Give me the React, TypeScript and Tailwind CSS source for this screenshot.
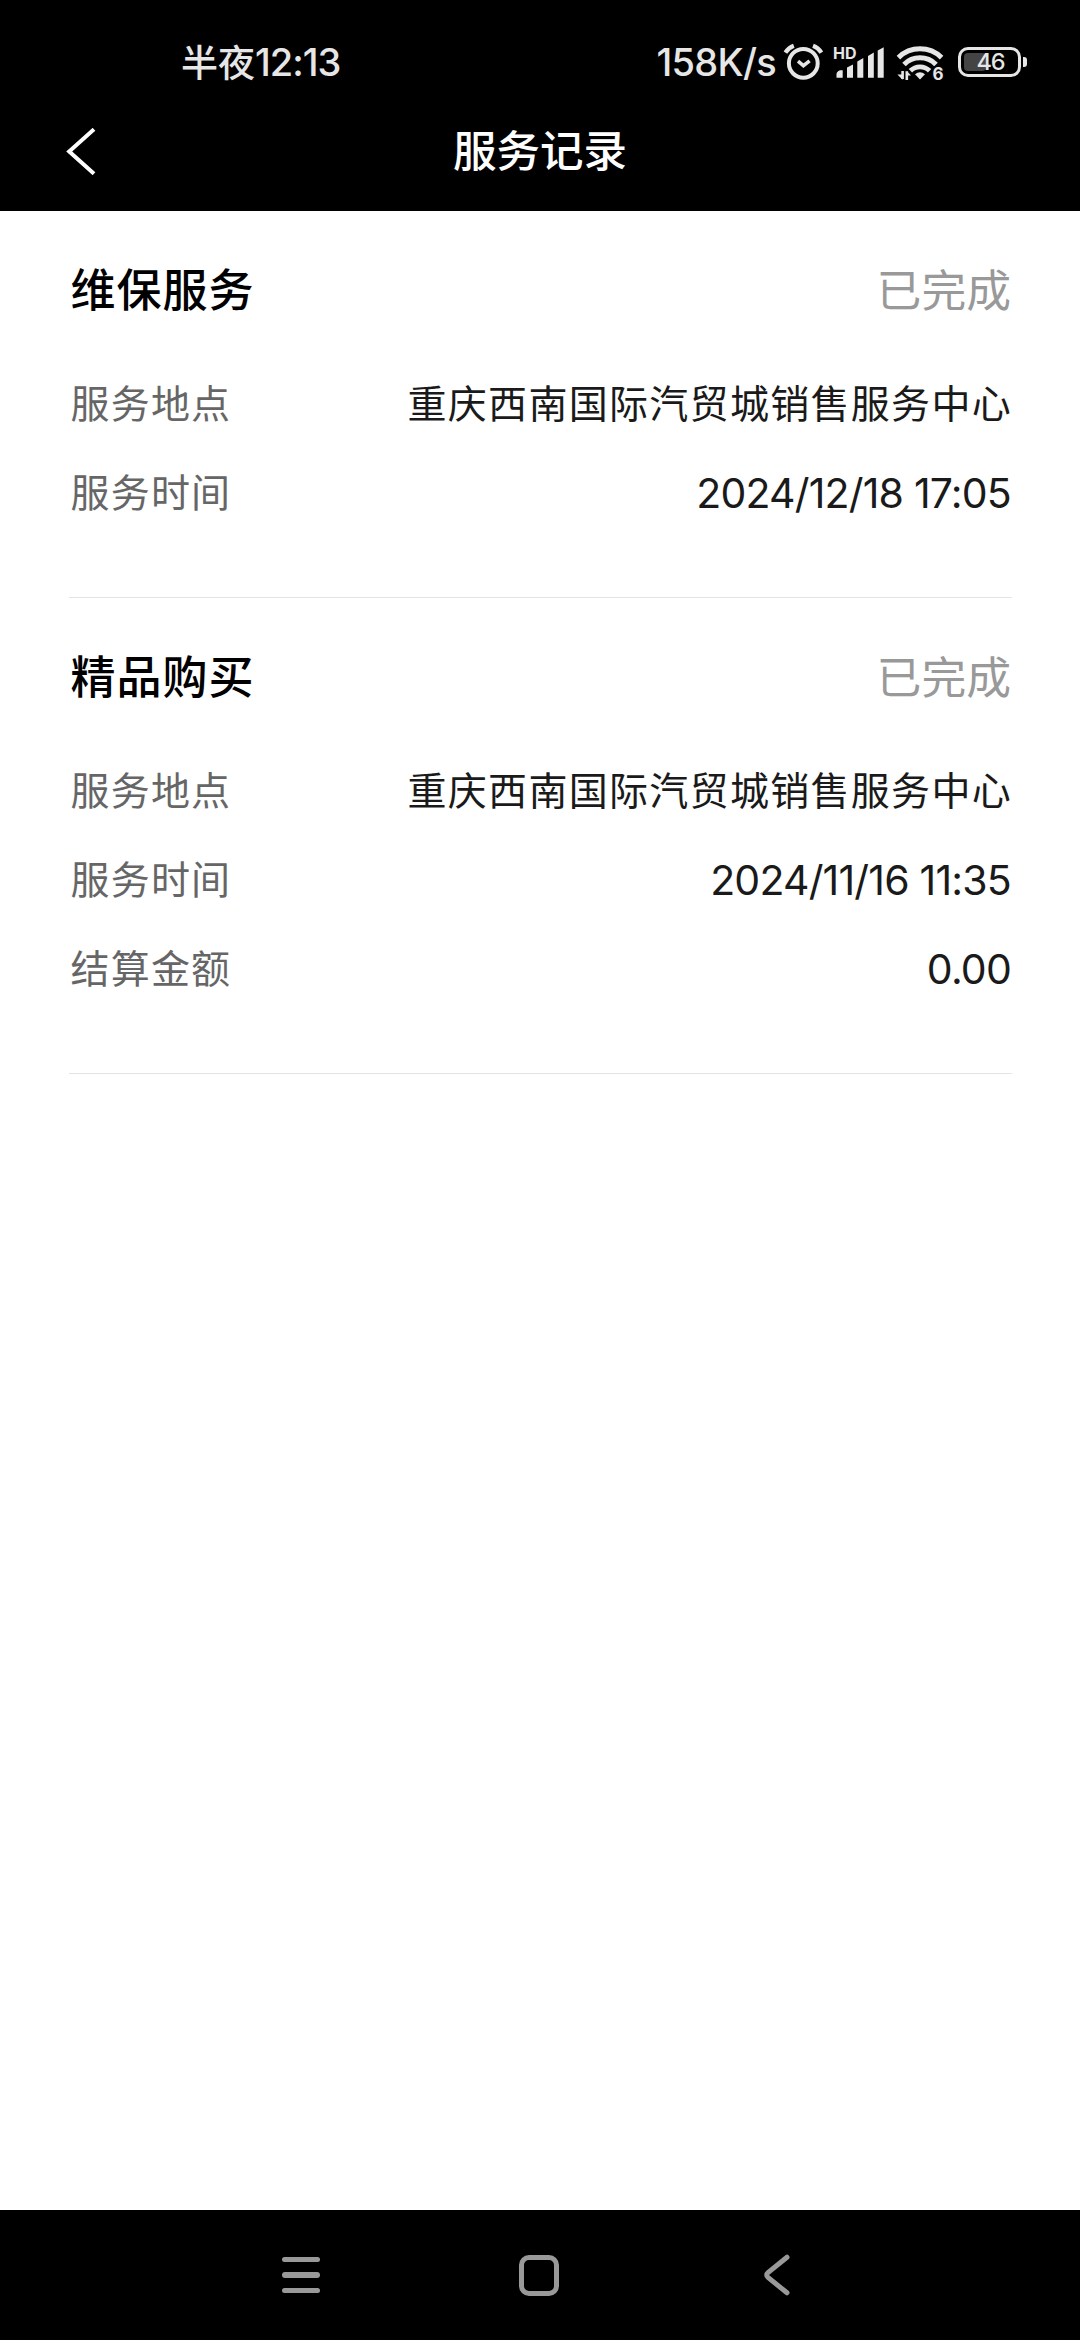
import React from "react";

type Row = { label: string; value: string; numeric?: boolean };
type ServiceRecord = { title: string; status: string; rows: Row[] };

const records: ServiceRecord[] = [
  {
    title: "维保服务",
    status: "已完成",
    rows: [
      { label: "服务地点", value: "重庆西南国际汽贸城销售服务中心" },
      { label: "服务时间", value: "2024/12/18 17:05", numeric: true },
    ],
  },
  {
    title: "精品购买",
    status: "已完成",
    rows: [
      { label: "服务地点", value: "重庆西南国际汽贸城销售服务中心" },
      { label: "服务时间", value: "2024/11/16 11:35", numeric: true },
      { label: "结算金额", value: "0.00", numeric: true },
    ],
  },
];

function AlarmIcon() {
  return (
    <svg className="ml-[6px] h-[40px] w-[42px]" viewBox="782 42 42 40" fill="none" stroke="#e6e6e6">
      <circle cx="803.3" cy="63.3" r="14.4" strokeWidth="4" />
      <path d="M785.4 52.6Q788.5 47.8 793.8 45.8M821.4 52.6Q818.3 47.8 813 45.8" strokeWidth="4.2" />
      <path d="M798 61.2L803.4 65.6L809.6 60.8" strokeWidth="3.6" />
    </svg>
  );
}

function SignalIcon() {
  return (
    <div className="relative ml-[9px] h-[40px] w-[52px]">
      <svg className="h-[40px] w-[52px]" viewBox="833 42 52 40" fill="#e6e6e6">
        <path d="M836.5 74Q836.5 71.8 840 70.2H842.7V77.7H836.5ZM847 67.5L853 64.5V77.7H847ZM857.3 61.5L863.3 58V77.7H857.3ZM868 56L873.8 52.6V77.7H868ZM877.7 50.5L883.7 47.2V77.7H877.7Z" />
      </svg>
      <span className="absolute top-[2px] left-0 font-[Inter] text-[16px] leading-[18px] font-bold text-[#e6e6e6]">HD</span>
    </div>
  );
}

function WifiIcon() {
  return (
    <div className="relative ml-[11px] h-[40px] w-[48px]">
      <svg className="h-[40px] w-[48px]" viewBox="896 42 48 40" fill="none" stroke="#e6e6e6">
        <path d="M898.4 57.6A31 31 0 0 1 941.6 57.6" strokeWidth="5" />
        <path d="M904 64.4A22.6 22.6 0 0 1 936 64.4" strokeWidth="5" />
        <path d="M910.4 70.8A13.6 13.6 0 0 1 929.6 70.8" strokeWidth="4.8" />
        <path d="M915 74.3Q920 70 925 74.3L920 79.4Z" fill="#e6e6e6" stroke="none" />
        <path d="M902.6 71V79M906.8 80V71.3" strokeWidth="2.6" />
        <path d="M897.4 74.6L902.6 74.6V79.8ZM906.8 71L911 75.6H906.8Z" fill="#e6e6e6" stroke="none" />
      </svg>
      <span className="absolute top-[22px] left-[36.5px] font-[Inter] text-[17px] leading-[20px] font-bold text-[#e6e6e6]">6</span>
    </div>
  );
}

function BatteryIcon() {
  return (
    <div className="ml-[14px] flex items-center">
      <div className="relative h-[30px] w-[63px] rounded-[10px] border-[3px] border-[#e6e6e6] p-[3px]">
        <div className="h-full w-[22px] rounded-[4px] bg-[#444444]" />
        <span className="absolute inset-0 pl-[2px] text-center font-[Inter] text-[23.5px] leading-[24px] font-medium tracking-[-1.2px] text-[#e6e6e6]">46</span>
      </div>
      <div className="ml-[2px] h-[10px] w-[4px] rounded-r-[3px] bg-[#e6e6e6]" />
    </div>
  );
}

function StatusBar() {
  return (
    <div className="flex h-[124px] items-center justify-between pr-[53px] pl-[181px] text-[#e6e6e6]">
      <div className="flex items-center">
        <span className="-mt-[3px] text-[37px] leading-[44px] font-medium">半夜</span>
        <span className="font-[Inter] text-[38px] leading-[44px] font-medium tracking-[-1px]">12:13</span>
      </div>
      <div className="flex items-center">
        <span className="font-[Inter] text-[38px] leading-[44px] font-medium tracking-[-0.7px]">158K/s</span>
        <AlarmIcon />
        <SignalIcon />
        <WifiIcon />
        <BatteryIcon />
      </div>
    </div>
  );
}

function TitleBar() {
  return (
    <div className="grid h-[87px] grid-cols-3 items-start px-[66px]">
      <svg className="mt-[4px] h-[47px] w-[30px]" viewBox="0 0 30 47" fill="none" stroke="#fff" strokeWidth="4">
        <path d="M28 1.3L3.2 23.4L28 45.7" />
      </svg>
      <h1 className="-mt-[2px] text-center text-[43.5px] leading-[54px] font-medium text-white">服务记录</h1>
    </div>
  );
}

function RecordCard({ record }: { record: ServiceRecord }) {
  return (
    <section className="mr-[68px] ml-[69px] border-b border-[#e4e4e4] pr-px pl-[1.5px] pt-[45px] pb-[60px]">
      <div className="flex h-[64px] items-center justify-between">
        <h2 className="text-[45px] leading-[64px] font-medium tracking-[1px] text-black">{record.title}</h2>
        <span className="text-[44.8px] leading-[64px] text-[#999999]">{record.status}</span>
      </div>
      <dl className="mt-[39px]">
        {record.rows.map((row) => (
          <div key={row.label} className="flex h-[89px] items-center justify-between">
            <dt className="-mt-[5px] text-[39px] leading-[56px] tracking-[1.2px] text-[#666666]">{row.label}</dt>
            {row.numeric ? (
              <dd className="font-[Inter] text-[41px] leading-[56px] tracking-[-0.8px] text-[#1a1a1a]">{row.value}</dd>
            ) : (
              <dd className="-mt-[5px] mr-[-1px] text-[39px] leading-[56px] tracking-[1.3px] text-[#1a1a1a]">{row.value}</dd>
            )}
          </div>
        ))}
      </dl>
    </section>
  );
}

function NavBar() {
  return (
    <nav className="flex h-[130px] items-center bg-black pl-[282px]">
      <div className="flex w-[38px] flex-col gap-[10px]">
        <div className="h-[5.5px] rounded-full bg-[#999999]" />
        <div className="h-[5.5px] rounded-full bg-[#999999]" />
        <div className="h-[5.5px] rounded-full bg-[#999999]" />
      </div>
      <div className="ml-[199px] h-[41px] w-[40px] rounded-[10px] border-[5px] border-[#999999]" />
      <svg className="ml-[204px] h-[42px] w-[27px]" viewBox="0 0 27 42" fill="none" stroke="#999" strokeWidth="5" strokeLinecap="round">
        <path d="M24 3.2L5 18.6Q2.4 21 5 23.4L24 38.8" />
      </svg>
    </nav>
  );
}

export default function App() {
  return (
    <div className="flex h-[2340px] w-[1080px] flex-col overflow-hidden bg-white font-['Noto_Sans_CJK_SC',sans-serif]">
      <header className="h-[211px] bg-black">
        <StatusBar />
        <TitleBar />
      </header>
      <main className="flex-1">
        {records.map((r) => (
          <RecordCard key={r.title} record={r} />
        ))}
      </main>
      <NavBar />
    </div>
  );
}
